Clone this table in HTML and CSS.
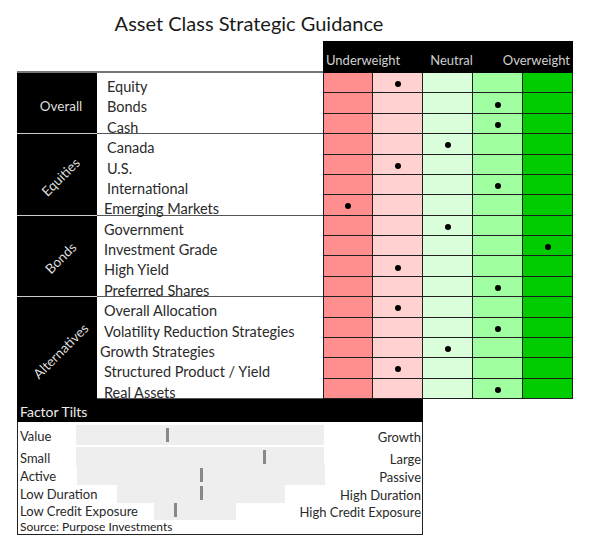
FILE: index.html
```html
<!DOCTYPE html>
<html>
<head>
<meta charset="utf-8">
<link rel="stylesheet" href="styles.css">
</head>
<body>
<div class="page">
  <h1 class="title">Asset Class Strategic Guidance</h1>
  <div class="board">
    <div class="corner"></div>
    <div class="scale"><span>Underweight</span><span>Neutral</span><span>Overweight</span></div>

    <div class="cat g1"><span>Overall</span></div>
    <div class="cat g2"><span class="rot">Equities</span></div>
    <div class="cat g3"><span class="rot">Bonds</span></div>
    <div class="cat g4"><span class="rot">Alternatives</span></div>

    <div class="lbl">Equity</div>
    <div class="c c1"></div><div class="c c2"><i class="dot"></i></div><div class="c c3"></div><div class="c c4"></div><div class="c c5"></div>
    <div class="lbl">Bonds</div>
    <div class="c c1"></div><div class="c c2"></div><div class="c c3"></div><div class="c c4"><i class="dot"></i></div><div class="c c5"></div>
    <div class="lbl last">Cash</div>
    <div class="c c1"></div><div class="c c2"></div><div class="c c3"></div><div class="c c4"><i class="dot"></i></div><div class="c c5"></div>

    <div class="lbl">Canada</div>
    <div class="c c1"></div><div class="c c2"></div><div class="c c3"><i class="dot"></i></div><div class="c c4"></div><div class="c c5"></div>
    <div class="lbl">U.S.</div>
    <div class="c c1"></div><div class="c c2"><i class="dot"></i></div><div class="c c3"></div><div class="c c4"></div><div class="c c5"></div>
    <div class="lbl">International</div>
    <div class="c c1"></div><div class="c c2"></div><div class="c c3"></div><div class="c c4"><i class="dot"></i></div><div class="c c5"></div>
    <div class="lbl last in7">Emerging Markets</div>
    <div class="c c1"><i class="dot"></i></div><div class="c c2"></div><div class="c c3"></div><div class="c c4"></div><div class="c c5"></div>

    <div class="lbl in7">Government</div>
    <div class="c c1"></div><div class="c c2"></div><div class="c c3"><i class="dot"></i></div><div class="c c4"></div><div class="c c5"></div>
    <div class="lbl in7">Investment Grade</div>
    <div class="c c1"></div><div class="c c2"></div><div class="c c3"></div><div class="c c4"></div><div class="c c5"><i class="dot"></i></div>
    <div class="lbl in7">High Yield</div>
    <div class="c c1"></div><div class="c c2"><i class="dot"></i></div><div class="c c3"></div><div class="c c4"></div><div class="c c5"></div>
    <div class="lbl last in7">Preferred Shares</div>
    <div class="c c1"></div><div class="c c2"></div><div class="c c3"></div><div class="c c4"><i class="dot"></i></div><div class="c c5"></div>

    <div class="lbl in7">Overall Allocation</div>
    <div class="c c1"></div><div class="c c2"><i class="dot"></i></div><div class="c c3"></div><div class="c c4"></div><div class="c c5"></div>
    <div class="lbl in7">Volatility Reduction Strategies</div>
    <div class="c c1"></div><div class="c c2"></div><div class="c c3"></div><div class="c c4"><i class="dot"></i></div><div class="c c5"></div>
    <div class="lbl in3">Growth Strategies</div>
    <div class="c c1"></div><div class="c c2"></div><div class="c c3"><i class="dot"></i></div><div class="c c4"></div><div class="c c5"></div>
    <div class="lbl in7">Structured Product / Yield</div>
    <div class="c c1"></div><div class="c c2"><i class="dot"></i></div><div class="c c3"></div><div class="c c4"></div><div class="c c5"></div>
    <div class="lbl last in7">Real Assets</div>
    <div class="c c1"></div><div class="c c2"></div><div class="c c3"></div><div class="c c4"><i class="dot"></i></div><div class="c c5"></div>
  </div>

  <div class="tilts">
    <div class="tilts-head">Factor Tilts</div>
    <div class="tilts-body">
      <div class="trow tall">
        <div class="bar" style="margin-left:0;width:248px"><i class="mark" style="left:36.7%"></i></div>
        <span class="ll">Value</span><span class="rl">Growth</span>
      </div>
      <div class="trow">
        <div class="bar" style="margin-left:0;width:248px"><i class="mark" style="left:75.8%"></i></div>
        <span class="ll">Small</span><span class="rl">Large</span>
      </div>
      <div class="trow">
        <div class="bar" style="margin-left:1px;width:248px"><i class="mark" style="left:50%"></i></div>
        <span class="ll">Active</span><span class="rl">Passive</span>
      </div>
      <div class="trow short">
        <div class="bar" style="margin-left:41px;width:168px"><i class="mark" style="left:50%"></i></div>
        <span class="ll">Low Duration</span><span class="rl">High Duration</span>
      </div>
      <div class="trow">
        <div class="bar" style="margin-left:78px;width:82px"><i class="mark" style="left:25.6%"></i></div>
        <span class="ll">Low Credit Exposure</span><span class="rl">High Credit Exposure</span>
      </div>
      <div class="source">Source: Purpose Investments</div>
    </div>
  </div>
</div>
</body>
</html>
```

FILE: styles.css
```css
* { box-sizing: border-box; }
body {
  margin: 0;
  background: #fff;
  font-family: Lato, "Open Sans", sans-serif;
  color: #222;
}
.title {
  margin: 0;
  height: 41px;
  padding: 9px 114px 0 0;
  line-height: 28px;
  font-size: 20px;
  font-weight: 400;
  text-align: center;
  color: #1a1a1a;
}
.board {
  margin-left: 17px;
  display: grid;
  grid-template-columns: 80px 226px repeat(5, 50px);
  grid-template-rows: 32px repeat(16, 20.375px);
}
.corner {
  grid-column: 1 / span 2;
  grid-row: 1;
  border-bottom: 2px solid #777;
}
.scale {
  grid-column: 3 / span 5;
  grid-row: 1;
  background: #000;
  color: #cfcfcf;
  font-size: 13px;
  line-height: 15.6px;
  display: flex;
  justify-content: space-between;
  align-items: flex-end;
  padding: 0 3px 4px 3px;
}
.cat {
  grid-column: 1;
  background: #000;
  color: #ddd;
  font-size: 13.5px;
  display: flex;
  align-items: center;
  justify-content: center;
  padding: 5px 0 0 8px;
  border-bottom: 1px solid #ccc;
}
.g1 { grid-row: 2 / span 3; }
.g2 { grid-row: 5 / span 4; }
.g3 { grid-row: 9 / span 4; }
.g4 { grid-row: 13 / span 5; border-bottom: 0; }
.rot { display: inline-block; transform: rotate(-45deg); white-space: nowrap; }
.lbl {
  grid-column: 2;
  font-size: 14.5px;
  line-height: 20px;
  padding: 4px 0 0 10px;
  white-space: nowrap;
  color: #2a2a2a;
}
.lbl.in7 { padding-left: 7px; }
.lbl.in3 { padding-left: 3px; }
.lbl.last { border-bottom: 1px solid #555; }
.c {
  border-right: 1px solid #1e1e1e;
  border-bottom: 1px solid #1e1e1e;
  display: flex;
  align-items: center;
  justify-content: center;
  padding-top: 3px;
}
.c1 { background: #ff8f8f; border-left: 1px solid #1e1e1e; }
.c2 { background: #ffd1d1; }
.c3 { background: #daffda; }
.c4 { background: #a0ffa0; }
.c5 { background: #00cc00; }
.dot {
  width: 6px;
  height: 6px;
  border-radius: 50%;
  background: #000;
}
.tilts {
  width: 406px;
  margin: -1px 0 0 17px;
  border: 1px solid #222;
  border-top: 0;
}
.tilts-head {
  height: 24px;
  background: #000;
  color: #eee;
  font-size: 14px;
  line-height: 24px;
  margin: 0 -1px;
  padding: 2px 0 0 3px;
}
.tilts-body { padding-top: 2px; }
.trow {
  display: grid;
  grid-template-columns: 58px 248px 1fr;
  height: 18px;
  align-items: center;
  font-size: 13px;
  line-height: 18px;
  color: #2a2a2a;
}
.trow.tall { height: 22px; }
.trow.short { height: 17px; }
.bar {
  grid-column: 2;
  grid-row: 1;
  height: calc(100% - 2px);
  background: #eee;
  position: relative;
  justify-self: start;
}
.mark {
  position: absolute;
  top: 3px;
  bottom: 3px;
  width: 3px;
  margin-left: -1px;
  background: #888;
}
.ll {
  grid-column: 1 / span 2;
  grid-row: 1;
  justify-self: start;
  padding: 1px 0 0 2px;
  white-space: nowrap;
}
.rl {
  grid-column: 2 / span 2;
  grid-row: 1;
  justify-self: end;
  padding: 4px 1px 0 0;
  white-space: nowrap;
}
.source {
  height: 17px;
  font-size: 12px;
  line-height: 16px;
  padding: 2px 0 0 2px;
}
```
